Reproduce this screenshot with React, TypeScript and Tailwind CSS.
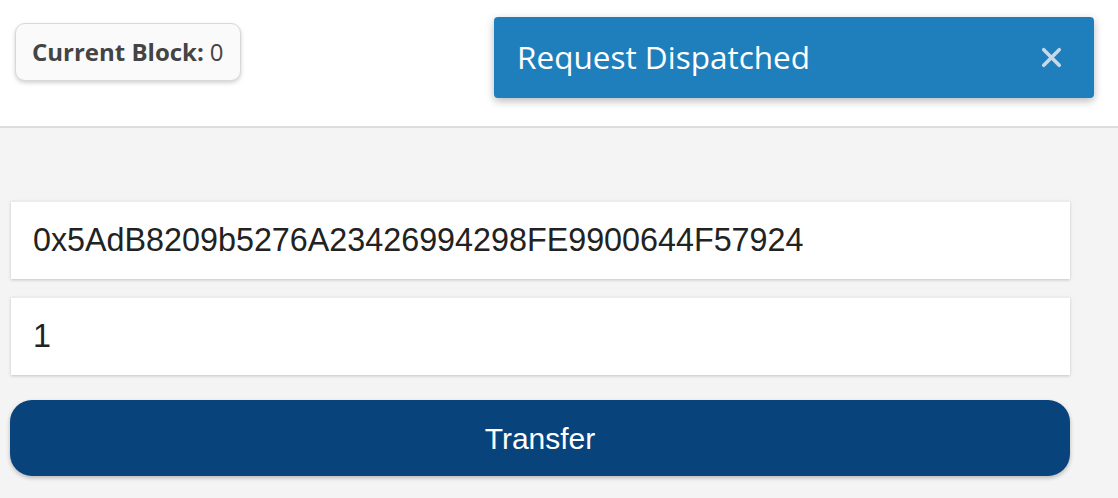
import { X } from "lucide-react"

export default function App() {
  return (
    <div className="min-h-[498px] bg-[#f4f4f4] font-['Open_Sans',sans-serif]">
      <div className="h-[128px] bg-white border-b-2 border-[#dcdcdc] flex items-start justify-between pl-[15px] pr-[24px]">
        <div className="mt-[23px] h-[58px] w-[226px] rounded-[10px] border border-[#d8d8d8] bg-[#fafafa] shadow-[0_2px_4px_rgba(0,0,0,0.18)] flex items-center pl-[16px] text-[24px] text-[#444]">
          <span className="font-bold">Current Block:</span>
          <span className="ml-[6px]">0</span>
        </div>
        <div className="mt-[17px] h-[81px] w-[600px] rounded-[4px] bg-[#1f7fbc] shadow-[0_3px_8px_rgba(0,0,0,0.28)] flex items-center justify-between pl-[23px] pr-[27px]">
          <span className="text-white text-[31.5px] leading-none pb-[2px]">Request Dispatched</span>
          <X size={31} strokeWidth={2.8} className="text-[#c3dbec]" />
        </div>
      </div>
      <div className="flex flex-col pl-[11px] pr-[48px] pt-[73px] font-['Liberation_Sans',Arial,sans-serif]">
        <div className="h-[78px] bg-white shadow-[0_1px_3px_rgba(0,0,0,0.2)] border-t border-[#ebebeb] flex items-center pl-[22px] text-[32.3px] text-[#222]">
          0x5AdB8209b5276A23426994298FE9900644F57924
        </div>
        <div className="mt-[18px] h-[78px] bg-white shadow-[0_1px_3px_rgba(0,0,0,0.2)] border-t border-[#ebebeb] flex items-center pl-[22px] text-[32.3px] text-[#222]">
          1
        </div>
        <button className="mt-[25px] -ml-[1px] h-[76px] rounded-[22px] bg-[#08437c] text-white text-[30px] shadow-[0_2px_4px_rgba(0,0,0,0.25)]">
          Transfer
        </button>
      </div>
    </div>
  )
}
